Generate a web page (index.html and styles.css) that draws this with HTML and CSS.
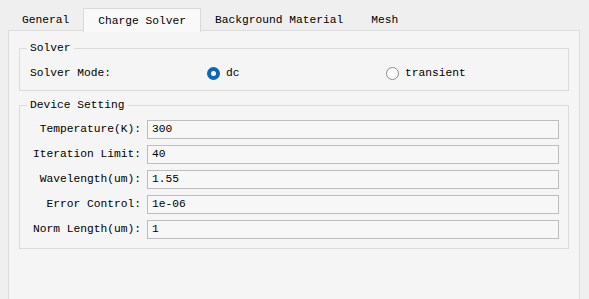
FILE: index.html
```html
<!DOCTYPE html>
<html lang="en">
<head>
    <meta charset="UTF-8">
    <title>Charge Solver</title>
    <link rel="stylesheet" href="styles.css">
</head>
<body>
    <div class="tabs">
        <div class="tab">General</div>
        <div class="tab active">Charge Solver</div>
        <div class="tab">Background Material</div>
        <div class="tab">Mesh</div>
    </div>
    <div class="pane">
        <fieldset class="group">
            <legend>Solver</legend>
            <div class="solver-row">
                <span>Solver Mode:</span>
                <label class="radio"><span class="dot checked"></span>dc</label>
                <label class="radio"><span class="dot"></span>transient</label>
            </div>
        </fieldset>
        <fieldset class="group">
            <legend>Device Setting</legend>
            <div class="form-grid">
                <label>Temperature(K):</label>
                <div class="field">300</div>
                <label>Iteration Limit:</label>
                <div class="field">40</div>
                <label>Wavelength(um):</label>
                <div class="field">1.55</div>
                <label>Error Control:</label>
                <div class="field">1e-06</div>
                <label>Norm Length(um):</label>
                <div class="field">1</div>
            </div>
        </fieldset>
    </div>
</body>
</html>
```

FILE: styles.css
```css
body { margin: 0; background: #efefef; font-family: "Liberation Mono", monospace; font-size: 11.25px; color: #000; height: 299px; overflow: hidden; }
.tabs { display: flex; margin: 8px 0 0 8px; height: 23px; }
.tab { padding: 0 14px; line-height: 25px; white-space: nowrap; }
.tab.active { background: #f9f9f9; border: 1px solid #d9d9d9; border-bottom: none; line-height: 24px; height: 23px; position: relative; z-index: 1; }
.pane { margin: -1px 9px 0 8px; height: 258px; background: #f5f5f5; border: 1px solid #dcdcdc; padding: 11px 10px 0 10px; }
.group { border: 1px solid #dcdcdc; margin: 0 0 8px 0; padding: 0 9px 0 10px; }
.group legend { padding: 0 3px; margin-left: -3px; line-height: 13px; }
.solver-row { display: grid; grid-template-columns: 177px 179px 1fr; align-items: center; height: 18px; margin: 9px 0 8px 0; }
.radio { display: flex; align-items: center; gap: 6px; }
.dot { width: 11px; height: 11px; border-radius: 50%; border: 1px solid #8a8a8a; background: #fdfdfd; }
.dot.checked { border: 4px solid #0f65b8; width: 5px; height: 5px; background: #fff; }
.form-grid { display: grid; grid-template-columns: 111px 1fr; column-gap: 6px; row-gap: 6px; margin: 8px 0 9px 0; }
.form-grid label { text-align: right; line-height: 19px; white-space: nowrap; }
.field { height: 17px; line-height: 17px; border: 1px solid #bdbdbd; background: #f7f7f7; padding-left: 4px; }
```
